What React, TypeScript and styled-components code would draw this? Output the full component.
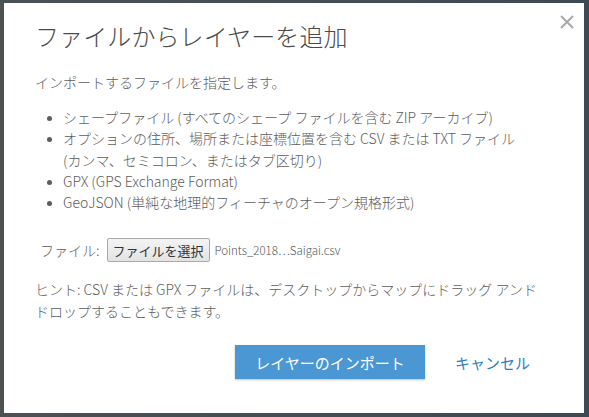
import React from 'react'
import styled, { createGlobalStyle } from 'styled-components'

const GlobalStyle = createGlobalStyle`
  html, body {
    margin: 0;
    padding: 0;
    background: #3f4a51;
  }
  * { box-sizing: border-box; }
`

const Backdrop = styled.div`
  width: 589px;
  height: 417px;
  padding: 3px 5px 4px 4px;
  background: linear-gradient(90deg, #4e5252 0px, #4a5154 4px, #3d4a53 100%);
  font-family: "Noto Sans CJK JP", "Noto Sans", sans-serif;
`

const Dialog = styled.div`
  position: relative;
  width: 580px;
  height: 410px;
  background: #fff;
  padding: 17px 31px 0 31px;
  color: #5c5c5c;
  font-weight: 300;
`

const Title = styled.h1`
  margin: 0;
  font-size: 24px;
  font-weight: 300;
  line-height: 32px;
  color: #4a4a4a;
  letter-spacing: 0.1px;
`

const CloseButton = styled.button`
  position: absolute;
  top: 8px;
  right: 6px;
  width: 22px;
  height: 22px;
  padding: 0;
  border: none;
  background: transparent;
  cursor: pointer;
`

const Text = styled.p<{ $top: number }>`
  margin: ${p => p.$top}px 0 0;
  font-size: 14px;
  line-height: 22px;
`

const List = styled.ul`
  margin: 14px 0 0;
  padding-left: 28px;
  font-size: 14px;
  line-height: 21.3px;
`

const Item = styled.li`
  &::marker { font-size: 12px; }
`

const NoWrap = styled.span`
  white-space: nowrap;
`

const FileRow = styled.div`
  display: flex;
  align-items: center;
  margin: 25px 0 0 5px;
  font-size: 14px;
`

const FileButton = styled.button`
  margin-left: 7px;
  height: 24px;
  padding: 0 5px;
  border: 1px solid #a9a9a9;
  border-radius: 2px;
  background: linear-gradient(#f4f4f4, #e3e3e3);
  font-family: inherit;
  font-size: 13px;
  font-weight: 400;
  color: #333;
`

const FileName = styled.span`
  margin-left: 5px;
  font-size: 11.5px;
  color: #555;
`

const Actions = styled.div`
  display: flex;
  align-items: center;
  justify-content: flex-end;
  margin-top: 23px;
  gap: 30px;
  padding-right: 23px;
`

const PrimaryButton = styled.button`
  width: 190px;
  height: 34px;
  border: none;
  background: #4a97d3;
  color: #fff;
  font-family: inherit;
  font-weight: 400;
  font-size: 15px;
  box-shadow: 0 1px 2px rgba(0, 0, 0, 0.25);
`

const LinkButton = styled.button`
  border: none;
  background: transparent;
  padding: 0;
  color: #2d7fc4;
  font-family: inherit;
  font-weight: 400;
  font-size: 15px;
`

export default function App() {
  return (
    <>
      <GlobalStyle />
      <Backdrop>
        <Dialog>
          <CloseButton aria-label="閉じる">
            <svg width="22" height="22" viewBox="0 0 22 22">
              <path d="M5 5 L17 17 M17 5 L5 17" stroke="#a8a8a8" strokeWidth="2" />
            </svg>
          </CloseButton>
          <Title>ファイルからレイヤーを追加</Title>
          <Text $top={19}>インポートするファイルを指定します。</Text>
          <List>
            <Item>シェープファイル (すべてのシェープ ファイルを含む ZIP アーカイブ)</Item>
            <Item>
              オプションの住所、場所または座標位置を含む CSV または TXT ファイル{' '}
              <NoWrap>(カンマ、セミコロン、またはタブ区切り)</NoWrap>
            </Item>
            <Item>GPX (GPS Exchange Format)</Item>
            <Item>GeoJSON (単純な地理的フィーチャのオープン規格形式)</Item>
          </List>
          <FileRow>
            ファイル:
            <FileButton>ファイルを選択</FileButton>
            <FileName>Points_2018…Saigai.csv</FileName>
          </FileRow>
          <Text $top={16}>
            ヒント: CSV または GPX ファイルは、デスクトップからマップにドラッグ アンド ドロップすることもできます。
          </Text>
          <Actions>
            <PrimaryButton>レイヤーのインポート</PrimaryButton>
            <LinkButton>キャンセル</LinkButton>
          </Actions>
        </Dialog>
      </Backdrop>
    </>
  )
}
